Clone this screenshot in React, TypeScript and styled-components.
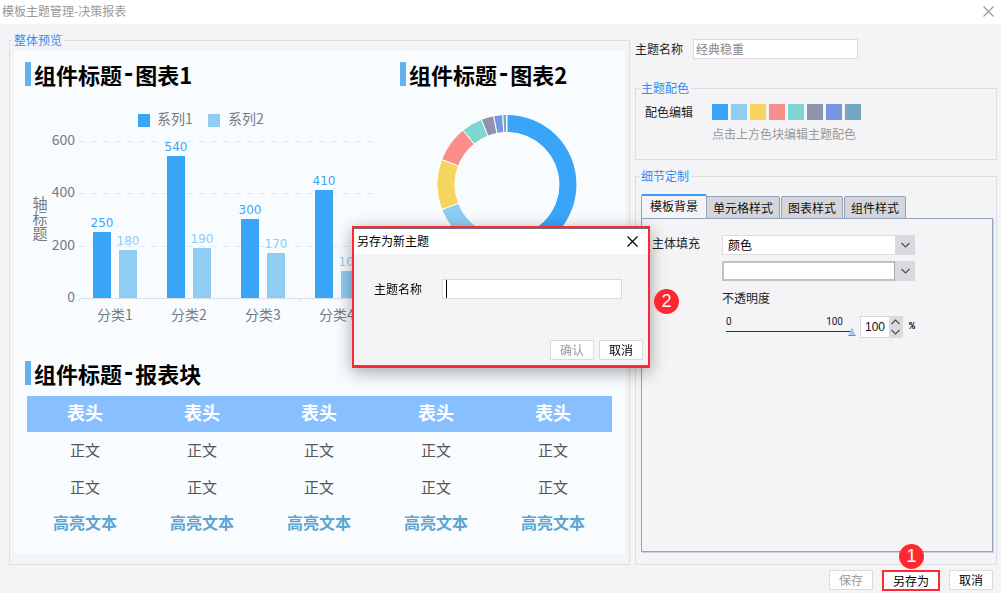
import React, { useState } from 'react';
import styled, { createGlobalStyle, css } from 'styled-components';

const FONT = '"Noto Sans CJK SC", "Liberation Sans", sans-serif';
const DIGITS = '"DejaVu Sans", "Noto Sans CJK SC", sans-serif';

const color = {
  page: '#f4f4f7',
  line: '#dedee1',
  link: '#2f8ef4',
  muted: '#999999',
  red: '#ff2830',
  tab: '#92a4bd',
  control: '#d9dade',
};

const PALETTE = ['#39a5f9', '#90cdf3', '#f5d55f', '#f98e8b', '#7dd6cf', '#9092ae', '#7796e0', '#76a5c5'];

const GlobalStyle = createGlobalStyle`
  *, *::before, *::after { box-sizing: border-box; }
  body { margin: 0; background: ${color.page}; }
  body, button, input, select { font-family: ${FONT}; font-size: 12px; line-height: 16px; color: #222; }
  h1, h2, p { margin: 0; font-weight: normal; font-size: inherit; }
  button, input, select { margin: 0; padding: 0; border-radius: 0; outline: none; }
`;

const Window = styled.div`
  display: flex;
  flex-direction: column;
  min-height: 100vh;
`;

const TitleBar = styled.header`
  display: flex;
  align-items: center;
  justify-content: space-between;
  height: 24px;
  padding: 0 7px 2px 2px;
  background: #fff;
  color: ${color.muted};
`;

const IconButton = styled.button`
  display: flex;
  border: 0;
  background: none;
  color: inherit;
`;

const Main = styled.main`
  flex: 1;
  display: grid;
  grid-template-columns: minmax(0, 621fr) minmax(0, 362fr);
  column-gap: 5px;
  padding: 8px 4px 0 9px;
`;

const Group = styled.fieldset<{ $grow?: boolean; $pad: string }>`
  display: flex;
  flex-direction: column;
  min-width: 0;
  margin: 0;
  padding: ${(p) => p.$pad};
  border: 1px solid ${color.line};
  ${(p) => p.$grow && css`flex: 1;`}
`;

const Legend = styled.legend`
  margin-left: -2px;
  padding: 0 2px;
  height: 16px;
  color: ${color.link};
`;

const Preview = styled.div`
  flex: 1;
  padding: 11px 0 13px 11px;
  background: #f9fcff;
`;

const Charts = styled.div`
  display: grid;
  grid-template-columns: minmax(0, 375fr) minmax(0, 225fr);
  margin-bottom: 31px;
`;

const WidgetTitle = styled.h2`
  display: flex;
  height: 24px;
  padding-left: 3px;
  border-left: 6px solid #63b1ef;
  font-size: 22px;
  font-weight: 700;
  line-height: 24px;
  color: #000;
`;

const Dash = styled.span`
  font-family: "DejaVu Sans Mono", monospace;
`;

const Drawing = styled.svg`
  display: block;
  width: 100%;
  height: auto;
  font-family: ${FONT};
  font-size: 14px;
  fill: #737b84;
`;

const ValueLabel = styled.text`
  font-family: ${DIGITS};
  font-size: 12px;
`;

const AxisTitle = styled.text`
  writing-mode: vertical-rl;
  font-size: 15px;
`;

const Table = styled.table`
  width: calc(100% - 15px);
  margin: 11px 13px 0 2px;
  table-layout: fixed;
  border-collapse: collapse;
  text-align: center;
  font-size: 15px;
  color: #555;

  th, td { height: 37px; padding: 0 1px 2px 0; line-height: 20px; }
  th { height: 36px; padding-bottom: 4px; background: #87bfff; color: #fff; font-size: 18px; font-weight: 700; }
`;

const HighlightRow = styled.tr`
  font-size: 16px;
  font-weight: 700;
  color: #5ba5cf;

  td { height: 34px; }
`;

const Side = styled.div`
  display: flex;
  flex-direction: column;
`;

const NameRow = styled.div`
  display: flex;
  align-items: center;
  gap: 10px;
  padding: 7px 0 21px;
`;

const TextInput = styled.input<{ $width: number }>`
  width: ${(p) => p.$width}px;
  height: 20px;
  padding: 0 2px 2px;
  border: 1px solid #dadadd;
  background: #fff;
  color: #888;
`;

const Form = styled.div<{ $label: number; $inset?: number }>`
  display: grid;
  grid-template-columns: ${(p) => p.$label}px minmax(0, 1fr);
  padding-left: ${(p) => p.$inset ?? 0}px;
`;

const Swatches = styled.div`
  display: flex;
  gap: 3px;
`;

const Swatch = styled.button<{ $color: string }>`
  width: 16px;
  height: 16px;
  border: 0;
  background: ${(p) => p.$color};
`;

const Hint = styled.p`
  grid-column: 2;
  margin-top: 6px;
  color: ${color.muted};
`;

const Spacer = styled.div`
  height: 8px;
`;

const Tabs = styled.div`
  display: flex;
  align-items: flex-end;
  gap: 1px;
  margin: 2px 0 -1px;
`;

const Tab = styled.button<{ $active: boolean }>`
  height: 23px;
  padding: 0 6px;
  border: 1px solid ${color.tab};
  border-radius: 2px 2px 0 0;
  background: #d6d6da;
  color: #111;
  ${(p) => p.$active && css`
    height: 25px;
    padding: 0 8px 3px;
    margin-right: -2px;
    border-top: 2px solid #419af7;
    border-bottom: 0;
    background: ${color.page};
  `}
`;

const TabPanel = styled.div`
  flex: 1;
  padding: 16px 10px;
  border: 1px solid ${color.tab};
  box-shadow: 1px 1px 0 #cdd3dc;
`;

const FillFields = styled.div`
  display: flex;
  flex-direction: column;
  align-items: flex-start;
`;

const SelectBox = styled.div<{ $well?: boolean }>`
  position: relative;
  width: 193px;
  height: 20px;
  margin-bottom: ${(p) => (p.$well ? 9 : 6)}px;

  select {
    appearance: none;
    width: 100%;
    height: 100%;
    padding: 0 24px 0 5px;
    border: 1px solid #dcdcdf;
    background: #fff;
    color: #000;
    ${(p) => p.$well && css`border: 2px solid #c2c2c5; border-right-width: 1px;`}
  }
`;

const SelectArrow = styled.span<{ $well?: boolean }>`
  position: absolute;
  top: 0;
  right: 0;
  display: grid;
  place-items: center;
  width: 20px;
  height: 20px;
  background: ${color.control};
  pointer-events: none;
  ${(p) => p.$well && css`border-left: 1px solid #aaa; width: 21px;`}
`;

const SliderRow = styled.div`
  display: flex;
  align-items: center;
  margin-top: 10px;
`;

const SliderBox = styled.div`
  width: 130px;
  margin: 0 4px;
`;

const Scale = styled.div`
  display: flex;
  justify-content: space-between;
  padding-right: 13px;
  height: 10px;
  font-family: "Roboto", sans-serif;
  font-size: 10px;
  line-height: 10px;
`;

const Slider = styled.input`
  display: block;
  appearance: none;
  width: 100%;
  height: 10px;
  background: linear-gradient(#333, #333) 0 4px / calc(100% - 4px) 1px no-repeat;

  &::-webkit-slider-thumb {
    appearance: none;
    width: 8px;
    height: 8px;
    background: linear-gradient(#6f8fb8 0 2px, #a3c8f2 2px 7px, #6f8fb8 7px);
    clip-path: polygon(50% 0, 100% 100%, 0 100%);
  }
`;

const Spinner = styled.div`
  display: flex;
  width: 43px;
  height: 22px;
  border: 1px solid ${color.control};
  background: #fff;

  input {
    width: 28px;
    padding-left: 4px;
    border: 0;
    background: none;
    font-family: "Liberation Sans", sans-serif;
    color: #111;
  }
`;

const SpinButtons = styled.div`
  flex: 1;
  display: grid;
  background: ${color.control};

  button {
    display: grid;
    place-items: center;
    border: 0;
    background: none;
  }
`;

const Percent = styled.span`
  margin-left: 6px;
  font-family: "Liberation Mono", monospace;
  font-size: 10px;
  font-weight: 700;
  color: #000;
`;

const Footer = styled.footer`
  display: flex;
  justify-content: flex-end;
  align-items: flex-start;
  gap: 9px;
  padding: 5px 8px 2px;
`;

const Button = styled.button`
  width: 44px;
  height: 20px;
  border: 1px solid ${color.control};
  background: #fff;
  color: #000;
  &:disabled { color: ${color.muted}; }
`;

const MarkedButton = styled(Button)`
  position: relative;
  width: 58px;
  height: 21px;
  border: 2px solid ${color.red};
`;

const Badge = styled.span<{ $left: string; $top: string }>`
  position: absolute;
  left: ${(p) => p.$left};
  top: ${(p) => p.$top};
  width: 25px;
  height: 25px;
  border-radius: 50%;
  background: ${color.red};
  color: #fff;
  font-family: "Liberation Sans", sans-serif;
  font-size: 18px;
  line-height: 25px;
  text-align: center;
`;

const Overlay = styled.div`
  position: fixed;
  inset: 0;
  display: grid;
  place-items: center;
  padding: 1px 0 0 1px;
`;

const Dialog = styled.section`
  position: relative;
  width: 298px;
  border: 2px solid ${color.red};
  background: ${color.page};
  box-shadow: 0 4px 16px rgba(0, 0, 0, 0.35);
`;

const DialogFrame = styled.div`
  border: solid #66727c;
  border-width: 1px 0;
`;

const DialogTitle = styled.header`
  display: flex;
  align-items: center;
  justify-content: space-between;
  height: 25px;
  padding: 0 10px 1px 3px;
  background: #fff;
  color: #000;
`;

const DialogField = styled.div`
  display: flex;
  align-items: center;
  gap: 20px;
  padding: 25px 20px 41px;
  color: #000;
`;

const CaretBox = styled.div`
  position: relative;
  display: flex;

  input { caret-color: transparent; }

  &::after {
    content: '';
    position: absolute;
    left: 4px;
    top: 1px;
    bottom: 1px;
    width: 1px;
    background: #000;
  }
`;

const DialogActions = styled.div`
  display: flex;
  justify-content: flex-end;
  gap: 5px;
  padding: 0 5px 5px;
`;

const CloseIcon = ({ size }: { size: number }) => (
  <svg width={size} height={size} viewBox="0 0 11 11" fill="none" stroke="currentColor" strokeWidth="1.1">
    <path d="M0.5 0.5 L10.5 10.5 M10.5 0.5 L0.5 10.5" />
  </svg>
);

const Chevron = ({ up }: { up?: boolean }) => (
  <svg width="9" height="6" viewBox="0 0 9 6" fill="none" stroke="#4b5058" strokeWidth="1.2">
    <path d={up ? 'M0.5 5 L4.5 1 L8.5 5' : 'M0.5 1 L4.5 5 L8.5 1'} />
  </svg>
);

const BASE = 212;
const toY = (value: number) => BASE - value * 0.262;

const categories = [
  { name: '分类1', values: [250, 180] },
  { name: '分类2', values: [540, 190] },
  { name: '分类3', values: [300, 170] },
  { name: '分类4', values: [410, 100] },
];

const BarChart = () => (
  <Drawing viewBox="0 0 375 244" role="img">
    {['系列1', '系列2'].map((name, i) => (
      <g key={name}>
        <rect x={113 + i * 70} y="28" width="12" height="13" fill={PALETTE[i]} />
        <text x={132 + i * 71} y="38">{name}</text>
      </g>
    ))}
    {[600, 400, 200, 0].map((tick) => (
      <g key={tick}>
        {tick > 0 && (
          <path d={`M54 ${Math.round(toY(tick)) + 0.5} H348`} stroke="#e3e7eb" strokeDasharray="6 6" />
        )}
        <text x="50" y={Math.round(toY(tick)) + 4} textAnchor="end">{tick}</text>
      </g>
    ))}
    <path d="M54.5 216 V212.5 H348 M275.5 216 V212.5" stroke="#dadee2" fill="none" />
    <AxisTitle x="15" y="110">轴标题</AxisTitle>
    {categories.map((category, c) => (
      <g key={category.name}>
        {category.values.map((value, s) => {
          const top = Math.floor(toY(value));
          return (
            <g key={s} fill={PALETTE[s]}>
              <rect x={68 + c * 74 + s * 26} y={top} width="18" height={BASE - top} />
              <ValueLabel x={77 + c * 74 + s * 26} y={top - 5} textAnchor="middle">{value}</ValueLabel>
            </g>
          );
        })}
        <text x={90 + c * 74} y="234" textAnchor="middle">{category.name}</text>
      </g>
    ))}
  </Drawing>
);

const STOPS = [0, 180, 249, 291, 321, 338.5, 349, 356.5, 359.5];

const point = (angle: number, radius: number) => {
  const rad = (angle * Math.PI) / 180;
  return `${107 + radius * Math.sin(rad)} ${98.5 - radius * Math.cos(rad)}`;
};

const RingChart = () => (
  <Drawing viewBox="0 0 225 244" role="img">
    {PALETTE.map((fill, i) => {
      const from = STOPS[i];
      const to = STOPS[i + 1];
      return (
        <path
          key={fill}
          fill={fill}
          stroke="#fff"
          d={`M${point(from, 70)} A70 70 0 0 1 ${point(to, 70)} L${point(to, 52)} A52 52 0 0 0 ${point(from, 52)} Z`}
        />
      );
    })}
  </Drawing>
);

const columns = [0, 1, 2, 3, 4];
const tabs = ['模板背景', '单元格样式', '图表样式', '组件样式'];

export default function App() {
  const [active, setActive] = useState(tabs[0]);
  const [opacity, setOpacity] = useState(100);
  const [name, setName] = useState('');
  const change = (value: number) => setOpacity(Math.max(0, Math.min(100, value || 0)));

  return (
    <Window>
      <GlobalStyle />
      <TitleBar>
        <h1>模板主题管理-决策报表</h1>
        <IconButton aria-label="关闭"><CloseIcon size={11} /></IconButton>
      </TitleBar>

      <Main>
        <Group $pad="3px 4px 10px">
          <Legend>整体预览</Legend>
          <Preview>
            <Charts>
              <div>
                <WidgetTitle>组件标题<Dash>-</Dash>图表1</WidgetTitle>
                <BarChart />
              </div>
              <div>
                <WidgetTitle>组件标题<Dash>-</Dash>图表2</WidgetTitle>
                <RingChart />
              </div>
            </Charts>
            <WidgetTitle>组件标题<Dash>-</Dash>报表块</WidgetTitle>
            <Table>
              <thead>
                <tr>{columns.map((c) => <th key={c} scope="col">表头</th>)}</tr>
              </thead>
              <tbody>
                <tr>{columns.map((c) => <td key={c}>正文</td>)}</tr>
                <tr>{columns.map((c) => <td key={c}>正文</td>)}</tr>
                <HighlightRow>{columns.map((c) => <td key={c}>高亮文本</td>)}</HighlightRow>
              </tbody>
            </Table>
          </Preview>
        </Group>

        <Side>
          <NameRow>
            <label htmlFor="theme">主题名称</label>
            <TextInput id="theme" $width={165} defaultValue="经典稳重" />
          </NameRow>

          <Group $pad="8px 5px 17px">
            <Legend>主题配色</Legend>
            <Form $label={67} $inset={4}>
              <span>配色编辑</span>
              <Swatches>
                {PALETTE.map((c) => <Swatch key={c} $color={c} aria-label={c} />)}
              </Swatches>
              <Hint>点击上方色块编辑主题配色</Hint>
            </Form>
          </Group>
          <Spacer />

          <Group $grow $pad="8px 3px 12px 5px">
            <Legend>细节定制</Legend>
            <Tabs role="tablist">
              {tabs.map((tab) => (
                <Tab key={tab} role="tab" aria-selected={tab === active} $active={tab === active} onClick={() => setActive(tab)}>
                  {tab}
                </Tab>
              ))}
            </Tabs>
            <TabPanel role="tabpanel">
              <Form $label={70}>
                <label htmlFor="fill">主体填充</label>
                <FillFields>
                  <SelectBox>
                    <select id="fill"><option>颜色</option></select>
                    <SelectArrow><Chevron /></SelectArrow>
                  </SelectBox>
                  <SelectBox $well>
                    <select aria-label="填充颜色"><option value="" /></select>
                    <SelectArrow $well><Chevron /></SelectArrow>
                  </SelectBox>
                  <label htmlFor="opacity">不透明度</label>
                  <SliderRow>
                    <SliderBox>
                      <Scale><span>0</span><span>100</span></Scale>
                      <Slider id="opacity" type="range" min={0} max={100} value={opacity} onChange={(e) => change(Number(e.target.value))} />
                    </SliderBox>
                    <Spinner>
                      <input aria-label="不透明度百分比" value={opacity} onChange={(e) => change(Number(e.target.value))} />
                      <SpinButtons>
                        <button aria-label="增加" onClick={() => change(opacity + 1)}><Chevron up /></button>
                        <button aria-label="减少" onClick={() => change(opacity - 1)}><Chevron /></button>
                      </SpinButtons>
                    </Spinner>
                    <Percent>%</Percent>
                  </SliderRow>
                </FillFields>
              </Form>
            </TabPanel>
          </Group>
        </Side>
      </Main>

      <Footer>
        <Button disabled>保存</Button>
        <MarkedButton>另存为<Badge $left="15px" $top="-28px">1</Badge></MarkedButton>
        <Button>取消</Button>
      </Footer>

      <Overlay>
        <Dialog role="dialog" aria-labelledby="dialog-title">
          <DialogFrame>
            <DialogTitle>
              <h2 id="dialog-title">另存为新主题</h2>
              <IconButton aria-label="关闭"><CloseIcon size={11} /></IconButton>
            </DialogTitle>
            <DialogField>
              <label htmlFor="new-name">主题名称</label>
              <CaretBox>
                <TextInput id="new-name" $width={180} value={name} onChange={(e) => setName(e.target.value)} />
              </CaretBox>
            </DialogField>
            <DialogActions>
              <Button disabled={!name}>确认</Button>
              <Button>取消</Button>
            </DialogActions>
          </DialogFrame>
          <Badge $left="300px" $top="61px">2</Badge>
        </Dialog>
      </Overlay>
    </Window>
  );
}
